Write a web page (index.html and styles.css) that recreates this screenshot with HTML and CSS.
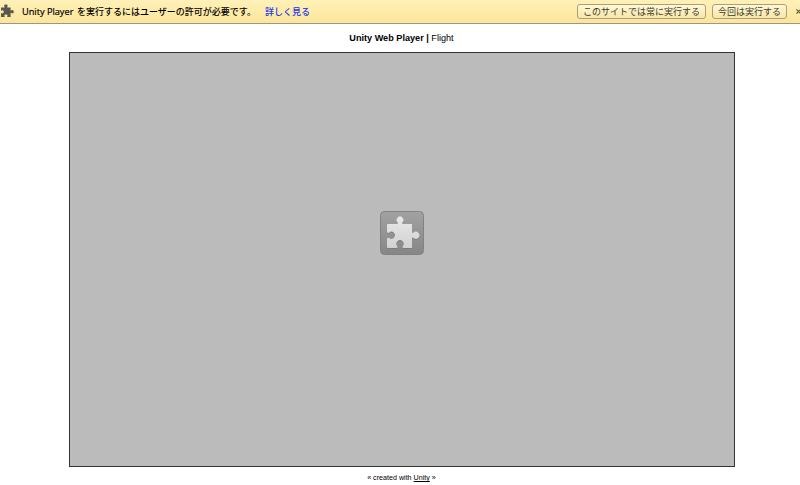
FILE: index.html
```
<!DOCTYPE html>
<html lang="ja">
<head>
<meta charset="utf-8">
<title>Unity Web Player | Flight</title>
<link rel="stylesheet" href="styles.css">
</head>
<body>
<div class="infobar">
  <svg class="plugin" viewBox="0 0 14 14"><path d="M1 3.6H4.5C5 3.2 4.1 2.6 4.1 1.7C4.1.1 7.7.1 7.7 1.7C7.7 2.6 6.8 3.2 7.3 3.6H10.6V6.6C11 7.1 11.5 6.1 12.3 6.1C14.2 6.1 14.2 9.5 12.3 9.5C11.5 9.5 11 8.5 10.6 9V13H7.4C6.7 12.5 7.5 12.2 7.5 11.4C7.5 10.1 4.4 10.1 4.4 11.4C4.4 12.2 5.2 12.5 4.5 13H1V9.2C1.4 8.7 1.8 9.4 2.5 9.4C4.2 9.4 4.2 6.3 2.5 6.3C1.8 6.3 1.4 7 1 6.5Z"/></svg>
  <span class="message"><span class="product">Unity Player</span><span>を実行するにはユーザーの許可が必要です。</span></span>
  <a class="more">詳しく見る</a>
  <button class="always">このサイトでは常に実行する</button>
  <button class="once">今回は実行する</button>
  <svg class="close" viewBox="0 0 5 5"><path d="M.4.4 4.6 4.6M4.6.4.4 4.6"/></svg>
</div>
<main>
  <p class="header"><b>Unity Web Player |</b> Flight</p>
  <div class="player">
    <svg class="tile" viewBox="0 0 44 44">
      <defs>
        <linearGradient id="tile" x1="0" y1="0" x2="0" y2="1"><stop offset="0" stop-color="#a2a2a2"/><stop offset="1" stop-color="#868686"/></linearGradient>
        <linearGradient id="piece" x1="0" y1="0" x2="0" y2="1"><stop offset="0" stop-color="#e8e8e8"/><stop offset="1" stop-color="#d2d2d2"/></linearGradient>
        <path id="jigsaw" d="M8 13H16.6Q18.4 12.9 17.8 11.6A3.4 3.4 0 1 1 22.2 11.6Q21.6 12.9 23.4 13H32V20.8Q32.2 22.6 33.4 21.8A3.5 3.5 0 1 1 33.4 26.8Q32.2 26 32 27.8V37H23.6Q21.8 36.8 22.6 35.4A3.6 3.6 0 1 0 17.4 35.4Q18.2 36.8 16.4 37H8Q7 37 7 36V28Q7.2 26.2 9 26.9A3.5 3.5 0 1 0 9 21.7Q7.2 22.4 7 20.6V14Q7 13 8 13Z"/>
      </defs>
      <rect x=".5" y=".5" width="43" height="43" rx="4" fill="url(#tile)" stroke="#828282"/>
      <use class="shade" href="#jigsaw" y=".8"/>
      <use href="#jigsaw" fill="url(#piece)"/>
    </svg>
  </div>
  <p class="footer">« created with <a>Unity</a> »</p>
</main>
</body>
</html>
```
FILE: styles.css
```
* { box-sizing: border-box; }
body {
  margin: 0;
  height: 485px;
  overflow: hidden;
  background: #fff;
  color: #000;
  font-family: "Liberation Sans", sans-serif;
}
.infobar {
  display: flex;
  align-items: center;
  height: 24px;
  border-bottom: 1px solid #9b9785;
  background: linear-gradient(#fff1b8, #fbe59a);
  font: 500 9px/14px "Open Sans", "Noto Sans CJK JP", sans-serif;
  white-space: nowrap;
  overflow: hidden;
}
.plugin { width: 14px; height: 14px; margin: 0 8px 1px 0; fill: #59574f; flex: none; }
.message { display: flex; gap: 3px; width: 243px; flex: none; }
.product { width: 52px; font-size: 9.2px; -webkit-text-stroke: .2px; }
.more { color: #1a35f0; }
.infobar button {
  height: 15px;
  padding: 0;
  border: 1px solid #a99f78;
  border-radius: 3px;
  background: linear-gradient(#fff8d8, #f8e6a6);
  color: #3d3a30;
  font: 9px/12px "Noto Sans CJK JP", sans-serif;
  flex: none;
}
.infobar .always { width: 129px; margin-left: auto; }
.infobar .once { width: 75px; margin: 0 9px 0 6px; }
.close { width: 5px; height: 5px; margin-right: -1px; stroke: #5d5847; stroke-width: 1.2; fill: none; flex: none; }
main { display: flex; flex-direction: column; align-items: center; }
p { margin: 0; white-space: nowrap; }
.header { height: 28px; margin-left: 3px; padding-top: 8px; font-size: 9.15px; line-height: 13px; }
.player {
  display: flex;
  align-items: center;
  justify-content: center;
  width: 666px;
  height: 415px;
  margin-left: 4px;
  padding-bottom: 53px;
  border: 1px solid #333;
  background: #bbb;
}
.tile { width: 44px; height: 44px; }
.shade { fill: #666; opacity: .5; }
.footer { padding-top: 6px; margin-left: 3px; font-size: 7.15px; line-height: 11px; }
.footer a { text-decoration: underline; }
```
